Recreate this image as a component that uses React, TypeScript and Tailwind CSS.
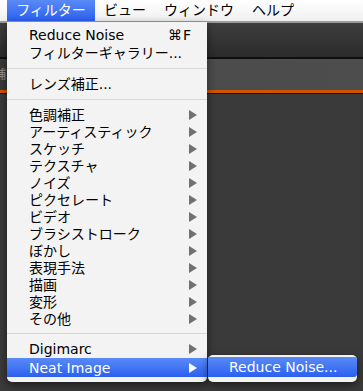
import React from 'react';

const font = { fontFamily: '"DejaVu Sans", "Noto Sans CJK JP", sans-serif' };

type Item = { label: string; shortcut?: string; arrow?: boolean; selected?: boolean; h: string };
type Row = Item | 'sep';

const rows: Row[] = [
  { label: 'Reduce Noise', shortcut: '⌘F', h: 'h-[18px]' },
  { label: 'フィルターギャラリー...', h: 'h-[18px]' },
  'sep',
  { label: 'レンズ補正...', h: 'h-[18px]' },
  'sep',
  { label: '色調補正', arrow: true, h: 'h-[17px]' },
  { label: 'アーティスティック', arrow: true, h: 'h-[17px]' },
  { label: 'スケッチ', arrow: true, h: 'h-[17px]' },
  { label: 'テクスチャ', arrow: true, h: 'h-[17px]' },
  { label: 'ノイズ', arrow: true, h: 'h-[17px]' },
  { label: 'ピクセレート', arrow: true, h: 'h-[17px]' },
  { label: 'ビデオ', arrow: true, h: 'h-[17px]' },
  { label: 'ブラシストローク', arrow: true, h: 'h-[17px]' },
  { label: 'ぼかし', arrow: true, h: 'h-[17px]' },
  { label: '表現手法', arrow: true, h: 'h-[17px]' },
  { label: '描画', arrow: true, h: 'h-[17px]' },
  { label: '変形', arrow: true, h: 'h-[17px]' },
  { label: 'その他', arrow: true, h: 'h-[17px]' },
  'sep',
  { label: 'Digimarc', arrow: true, h: 'h-[18px]' },
  { label: 'Neat Image', arrow: true, selected: true, h: 'h-[19px]' },
];

function Arrow({ white }: { white?: boolean }) {
  return (
    <svg width="8" height="10" viewBox="0 0 8 10">
      <path d="M0 0 L8 5 L0 10 Z" fill={white ? '#ffffff' : '#707070'} />
    </svg>
  );
}

function MenuRow({ item }: { item: Item }) {
  return (
    <div
      className={`flex items-center pl-[22px] pr-[10px] text-[14px] leading-none ${item.h} ${
        item.selected ? 'bg-gradient-to-b from-[#5a8af6] to-[#2b5ff0] text-white' : 'text-black'
      }`}
    >
      <span className="flex-1 whitespace-nowrap">{item.label}</span>
      {item.shortcut && <span className="mr-[5px] tracking-[1px]">{item.shortcut}</span>}
      {item.arrow && <Arrow white={item.selected} />}
    </div>
  );
}

export default function App() {
  return (
    <div className="relative w-[363px] h-[391px] overflow-hidden bg-[#3a3a3a]" style={font}>
      {/* menu bar */}
      <div className="flex h-[21px] items-center bg-gradient-to-b from-white to-[#f0f0f0] text-[14px] text-black">
        <div className="ml-[7px] flex h-full w-[88px] items-center justify-center bg-gradient-to-b from-[#5a8af6] to-[#2b5ff0] text-white">
          フィルター
        </div>
        <span className="ml-[9px]">ビュー</span>
        <span className="ml-[18px]">ウィンドウ</span>
        <span className="ml-[18px]">ヘルプ</span>
      </div>
      <div className="h-[2px] bg-[#9c9c9c]" />

      {/* app background bands */}
      <div className="h-[34px] bg-gradient-to-b from-[#3e3e3e] to-[#2b2b2b]" />
      <div className="h-[2px] bg-[#0e0e0e]" />
      <div className="flex h-[31px] items-center bg-gradient-to-r from-[#3a3a3a] via-[#4b4b4b] to-[#4d4d4d]">
        <span className="-ml-[6px] text-[12px] text-[#9a9a9a]">補正</span>
      </div>
      <div className="h-[3px] bg-[#d35400]" />
      <div className="h-[1px] bg-[#0c0c0c]" />

      {/* filter menu */}
      <div className="absolute left-[7px] top-[22px] w-[200px] rounded-b-[5px] bg-[#f3f3f3] pt-[4px] pb-[5px] shadow-[0_3px_8px_rgba(0,0,0,0.5)]">
        {rows.map((r, i) =>
          r === 'sep' ? (
            <div key={i} className="flex h-[13px] items-center">
              <div className="h-[1px] w-full bg-[#d8d8d8]" />
            </div>
          ) : (
            <MenuRow key={i} item={r} />
          )
        )}
      </div>

      {/* submenu */}
      <div className="absolute left-[208px] top-[355px] w-[149px] rounded-[5px] bg-[#f3f3f3] pt-[2px] pb-[5px] shadow-[0_3px_8px_rgba(0,0,0,0.5)]">
        <div className="flex h-[20px] items-center rounded-r-[3px] bg-gradient-to-b from-[#5a8af6] to-[#2b5ff0] pl-[21px] text-[14px] text-white">
          Reduce Noise...
        </div>
      </div>
    </div>
  );
}
